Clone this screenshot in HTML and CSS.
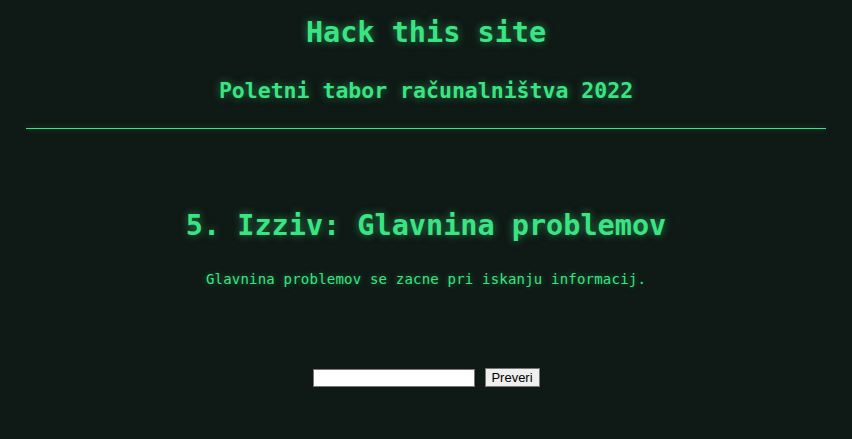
FILE: index.html
```html
<!DOCTYPE html>
<html lang="sl">
<head>
<meta charset="utf-8">
<title>Hack this site</title>
<link rel="stylesheet" href="styles.css">
</head>
<body>
<header class="site-header">
  <h1 class="site-title">Hack this site</h1>
  <h2 class="site-subtitle">Poletni tabor računalništva 2022</h2>
  <hr class="divider">
</header>
<main class="challenge">
  <h2 class="challenge-title">5. Izziv: Glavnina problemov</h2>
  <p class="challenge-text">Glavnina problemov se zacne pri iskanju informacij.</p>
  <form class="answer-form" onsubmit="return false;">
    <input class="answer-input" type="text">
    <button class="answer-button" type="submit">Preveri</button>
  </form>
</main>
</body>
</html>
```
FILE: styles.css
```css
html, body {
  margin: 0;
  padding: 0;
}
body {
  background: #0f1915;
  color: #3ae483;
  font-family: "DejaVu Sans Mono", "Liberation Mono", monospace;
  text-align: center;
  min-height: 439px;
}
.site-header {
  padding-top: 15px;
}
.site-title {
  margin: 0;
  font-size: 28.5px;
  line-height: 36px;
  font-weight: bold;
  text-shadow: 0 0 8px rgba(58, 228, 131, 0.55);
}
.site-subtitle {
  margin: 25px 0 0;
  font-size: 21.5px;
  line-height: 30px;
  font-weight: bold;
  text-shadow: 0 0 8px rgba(58, 228, 131, 0.5);
}
.divider {
  width: 800px;
  margin: 22px auto 0;
  border: 0;
  border-top: 1px solid #3ae483;
  height: 0;
  box-shadow: 0 0 6px rgba(58, 228, 131, 0.5);
}
.challenge {
  padding-top: 79px;
}
.challenge-title {
  margin: 0;
  font-size: 28.5px;
  line-height: 36px;
  font-weight: bold;
  text-shadow: 0 0 8px rgba(58, 228, 131, 0.55);
}
.challenge-text {
  margin: 25px 0 0;
  font-size: 14px;
  letter-spacing: 0.2px;
  line-height: 20px;
  text-shadow: 0 0 6px rgba(58, 228, 131, 0.45);
}
.answer-form {
  margin-top: 79px;
  display: flex;
  justify-content: center;
  align-items: center;
  gap: 10px;
}
.answer-input {
  box-sizing: border-box;
  width: 162px;
  height: 18px;
  margin: 0;
  padding: 1px 2px;
  border: 1px solid #767676;
  background: #fff;
}
.answer-button {
  box-sizing: border-box;
  width: 55px;
  height: 19px;
  margin: 0;
  padding: 0 3px;
  border: 1px solid #767676;
  background: #efefef;
  color: #000;
  font-family: "Liberation Sans", Arial, sans-serif;
  font-size: 13px;
  line-height: 17px;
}
```
